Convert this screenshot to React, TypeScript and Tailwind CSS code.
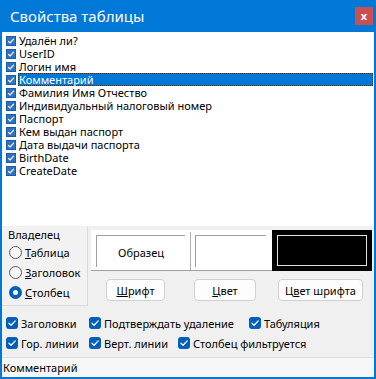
const fields = [
  "Удалён ли?",
  "UserID",
  "Логин имя",
  "Комментарий",
  "Фамилия Имя Отчество",
  "Индивидуальный налоговый номер",
  "Паспорт",
  "Кем выдан паспорт",
  "Дата выдачи паспорта",
  "BirthDate",
  "CreateDate",
];

const selectedRow = 3;

function ListCheck() {
  return (
    <svg width="10" height="10" viewBox="0 0 10 10" className="shrink-0">
      <rect x="0.5" y="0.5" width="9" height="9" fill="#2f72c2" stroke="#1d5aa6" />
      <path d="M2.2 5.1 L4.1 7 L7.9 2.9" fill="none" stroke="#fff" strokeWidth="1.2" />
    </svg>
  );
}

function BoxCheck() {
  return (
    <svg width="12" height="12" viewBox="0 0 12 12" className="shrink-0">
      <rect x="0" y="0" width="12" height="12" rx="3" fill="#005fb8" />
      <path d="M3 6.2 L5.1 8.2 L9.2 3.9" fill="none" stroke="#fff" strokeWidth="1.3" strokeLinecap="round" strokeLinejoin="round" />
    </svg>
  );
}

function Radio({ checked }: { checked?: boolean }) {
  if (checked) {
    return (
      <span className="flex h-[13px] w-[13px] shrink-0 items-center justify-center rounded-full bg-[#005fb8]">
        <span className="h-[5px] w-[5px] rounded-full bg-white" />
      </span>
    );
  }
  return <span className="h-[13px] w-[13px] shrink-0 rounded-full border border-[#5a5a5a] bg-[#f7f7f7]" />;
}

function Option({ label, cell }: { label: string; cell: string }) {
  return (
    <div className={`flex items-center gap-[3px] ${cell}`}>
      <BoxCheck />
      <span className="whitespace-nowrap">{label}</span>
    </div>
  );
}

export default function App() {
  return (
    <div className="flex h-[379px] w-[376px] flex-col bg-[#0078d7] px-[2px] pb-[2px] font-['Noto_Sans',sans-serif] text-[11px] leading-[13px] text-black">
      <div className="flex h-[32px] shrink-0 items-center justify-between pl-[8px] pr-[1px]">
        <span className="text-[15px] leading-[18px] text-white">Свойства таблицы</span>
        <div className="flex h-[18px] w-[18px] items-center justify-center bg-[#c85050] pb-[2px] text-[11px] font-bold text-white">
          x
        </div>
      </div>

      <div className="h-[194px] shrink-0 bg-white pt-[2px]">
        {fields.map((f, i) => (
          <div key={f} className="flex h-[13px] items-center pl-[4px]">
            <ListCheck />
            {i === selectedRow ? (
              <span className="ml-[2px] mr-[1px] flex h-[13px] flex-1 items-center border border-dotted border-[#333] bg-[#0078d7] leading-[11px] text-white">
                {f}
              </span>
            ) : (
              <span className="ml-[3px] leading-[13px]">{f}</span>
            )}
          </div>
        ))}
      </div>

      <div className="flex flex-1 flex-col bg-[#f0f0f0]">
        <div className="flex h-[80px] shrink-0">
          <div className="mt-[1px] h-[79px] w-[86px] shrink-0 border-r border-b border-[#dadada] bg-[#f2f2f2]">
            <div className="h-[14px] pl-[6px] pt-px">Владелец</div>
            <div className="mt-[1px] flex h-[20px] items-center gap-[3px] pl-[7px]">
              <Radio />
              <span>
                <span className="underline">Т</span>аблица
              </span>
            </div>
            <div className="flex h-[20px] items-center gap-[3px] pl-[7px]">
              <Radio />
              <span>
                <span className="underline">З</span>аголовок
              </span>
            </div>
            <div className="flex h-[20px] items-center gap-[3px] pl-[7px]">
              <Radio checked />
              <span>
                <span className="underline">С</span>толбец
              </span>
            </div>
          </div>

          <div className="flex flex-1 flex-col">
            <div className="ml-[3px] mt-[4px] flex h-[41px]">
              <div className="flex w-[181px] border-b border-[#a0a0a0] bg-white">
                <div className="ml-[5px] mt-[5px] flex h-[32px] w-[89px] items-center justify-center border-t border-l border-[#a0a0a0] pt-px">
                  Образец
                </div>
                <div className="ml-[5px] mt-[2px] w-px bg-[#b0b0b0]" />
                <div className="ml-[4px] mt-[5px] h-[32px] w-[71px] border-t border-l border-[#a0a0a0]" />
              </div>
              <div className="w-[100px] bg-black px-[5px] py-[5px]">
                <div className="h-full w-full border border-[#e0e0e0]" />
              </div>
            </div>

            <div className="mt-[8px] flex h-[22px]">
              <button className="ml-[18px] h-[22px] w-[59px] rounded-[4px] border border-[#d0d0d0] bg-[#fdfdfd]">
                <span className="underline">Ш</span>рифт
              </button>
              <button className="ml-[29px] h-[22px] w-[62px] rounded-[4px] border border-[#d0d0d0] bg-[#fdfdfd]">
                <span className="underline">Ц</span>вет
              </button>
              <button className="ml-[22px] h-[22px] w-[85px] rounded-[4px] border border-[#d0d0d0] bg-[#fdfdfd]">
                Ц<span className="underline">в</span>ет шрифта
              </button>
            </div>
          </div>
        </div>

        <div className="mt-[7px] flex h-[20px] items-center pl-[4px]">
          <Option label="Заголовки" cell="w-[83px]" />
          <Option label="Подтверждать удаление" cell="w-[160px]" />
          <Option label="Табуляция" cell="" />
        </div>
        <div className="flex h-[20px] items-center pl-[4px]">
          <Option label="Гор. линии" cell="w-[83px]" />
          <Option label="Верт. линии" cell="w-[89px]" />
          <Option label="Столбец фильтруется" cell="" />
        </div>

        <div className="mt-auto flex h-[20px] items-center border-t border-[#dcdcdc] bg-[#f7f7f7] pl-[1px]">
          Комментарий
        </div>
      </div>
    </div>
  );
}
